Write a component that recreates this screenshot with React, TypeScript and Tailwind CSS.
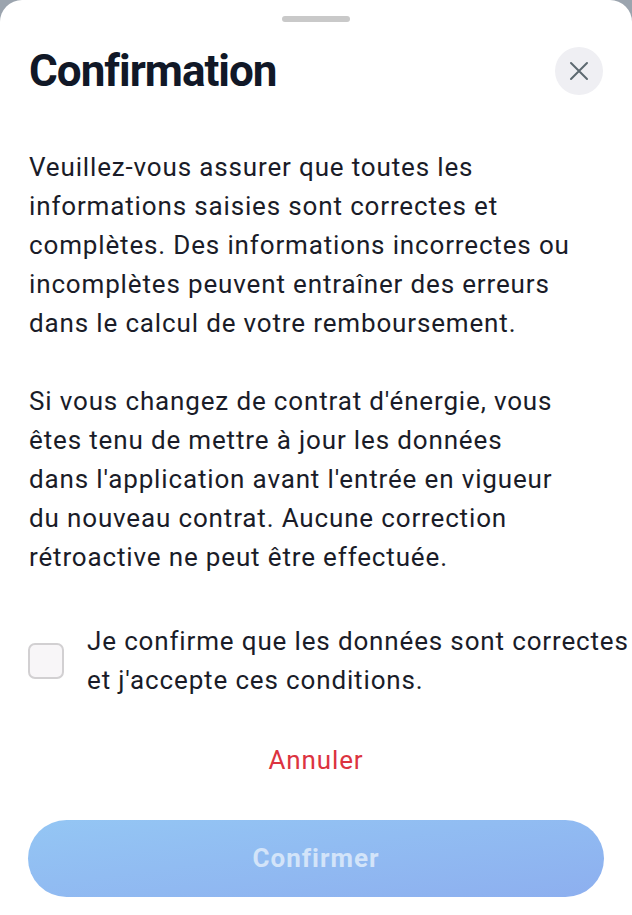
import React from "react";

export default function App() {
  return (
    <div className="w-[632px] h-[915px] bg-[#9ba4ae] overflow-hidden" style={{ fontFamily: "Roboto, 'Noto Sans', sans-serif" }}>
      <div className="h-full bg-white rounded-t-[22px] flex flex-col">
        <div className="flex justify-center pt-[16px]">
          <div className="w-[68px] h-[6px] rounded-full bg-[#c9c9c9]" />
        </div>
        <div className="flex items-start justify-between pl-[29px] pr-[29px] mt-[25px]">
          <h1 className="text-[44px] font-bold text-[#111827] tracking-[-1px] leading-[48px]">Confirmation</h1>
          <button className="w-[48px] h-[48px] rounded-full bg-[#efeff3] flex items-center justify-center">
            <svg width="20" height="20" viewBox="0 0 20 20" fill="none" stroke="#5d6970" strokeWidth="2" strokeLinecap="round">
              <path d="M2 2L18 18M18 2L2 18" />
            </svg>
          </button>
        </div>
        <div className="pl-[29px] pr-[10px] mt-[53px] text-[26px] tracking-[0.85px] leading-[39px] text-[#1a1c28] whitespace-nowrap">
          <p>Veuillez-vous assurer que toutes les<br />informations saisies sont correctes et<br />complètes. Des informations incorrectes ou<br />incomplètes peuvent entraîner des erreurs<br />dans le calcul de votre remboursement.</p>
          <p className="mt-[39px]">Si vous changez de contrat d'énergie, vous<br />êtes tenu de mettre à jour les données<br />dans l'application avant l'entrée en vigueur<br />du nouveau contrat. Aucune correction<br />rétroactive ne peut être effectuée.</p>
        </div>
        <div className="flex items-center pl-[28px] mt-[45px] gap-[23px] whitespace-nowrap">
          <div className="w-[36px] h-[36px] shrink-0 rounded-[7px] border-2 border-[#d2d0d2] bg-[#f8f6f8]" />
          <p className="text-[26px] tracking-[0.85px] leading-[39px] text-[#1a1c28]">Je confirme que les données sont correctes<br />et j'accepte ces conditions.</p>
        </div>
        <div className="flex justify-center mt-[41px]">
          <button className="text-[26px] tracking-[0.85px] leading-[39px] text-[#dc3340]">Annuler</button>
        </div>
        <div className="px-[28px] mt-[40px]">
          <button className="w-full h-[77px] rounded-full bg-gradient-to-br from-[#94c6f4] to-[#8dafef] text-[26px] tracking-[1px] font-bold text-[#d3e4f9]">Confirmer</button>
        </div>
      </div>
    </div>
  );
}
